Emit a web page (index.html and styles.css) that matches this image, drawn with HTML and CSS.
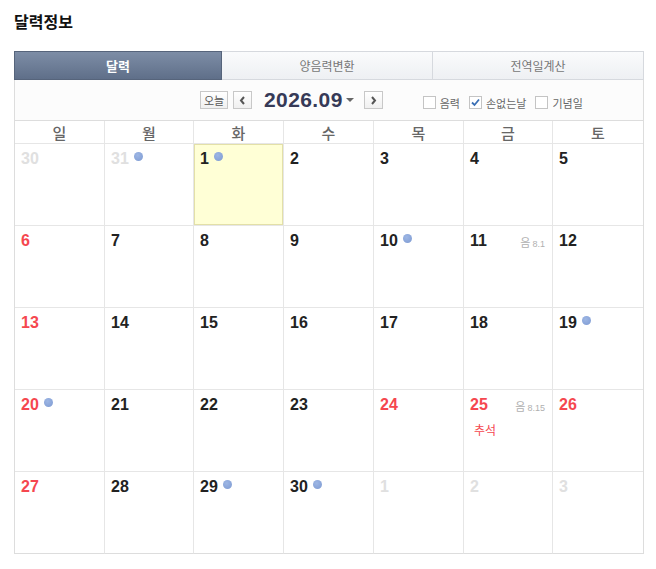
FILE: index.html
```html
<!DOCTYPE html>
<html lang="ko">
<head>
<meta charset="utf-8">
<link rel="stylesheet" href="styles.css">
</head>
<body>
<div class="wrap">
  <h1 class="title">달력정보</h1>
  <div class="tabs">
    <div class="tab active">달력</div>
    <div class="tab">양음력변환</div>
    <div class="tab">전역일계산</div>
  </div>
  <div class="toolbar">
    <button class="btn today">오늘</button>
    <button class="btn arrow"><svg width="7" height="9" viewBox="0 0 7 9"><path d="M5 1 L2 4.5 L5 8" fill="none" stroke="#555" stroke-width="2"/></svg></button>
    <div class="month">2026.09</div>
    <span class="caret"></span>
    <button class="btn arrow"><svg width="7" height="9" viewBox="0 0 7 9"><path d="M2 1 L5 4.5 L2 8" fill="none" stroke="#555" stroke-width="2"/></svg></button>
    <div class="checks">
      <label class="chk"><span class="box"></span>음력</label>
      <label class="chk"><span class="box"><svg width="11" height="11" viewBox="0 0 11 11"><path d="M2 5.5 L4.5 8 L9 2.5" fill="none" stroke="#3a6fb5" stroke-width="1.8"/></svg></span>손없는날</label>
      <label class="chk"><span class="box"></span>기념일</label>
    </div>
  </div>
  <div class="grid">
    <div class="wd">일</div><div class="wd">월</div><div class="wd">화</div><div class="wd">수</div><div class="wd">목</div><div class="wd">금</div><div class="wd">토</div>

    <div class="cell"><span class="num other">30</span></div>
    <div class="cell"><span class="num other">31</span><span class="dot"></span></div>
    <div class="cell today-cell"><span class="num">1</span><span class="dot"></span></div>
    <div class="cell"><span class="num">2</span></div>
    <div class="cell"><span class="num">3</span></div>
    <div class="cell"><span class="num">4</span></div>
    <div class="cell"><span class="num">5</span></div>

    <div class="cell"><span class="num red">6</span></div>
    <div class="cell"><span class="num">7</span></div>
    <div class="cell"><span class="num">8</span></div>
    <div class="cell"><span class="num">9</span></div>
    <div class="cell"><span class="num">10</span><span class="dot"></span></div>
    <div class="cell"><span class="num">11</span><span class="lunar"><span class="lk">음</span>8.1</span></div>
    <div class="cell"><span class="num">12</span></div>

    <div class="cell"><span class="num red">13</span></div>
    <div class="cell"><span class="num">14</span></div>
    <div class="cell"><span class="num">15</span></div>
    <div class="cell"><span class="num">16</span></div>
    <div class="cell"><span class="num">17</span></div>
    <div class="cell"><span class="num">18</span></div>
    <div class="cell"><span class="num">19</span><span class="dot"></span></div>

    <div class="cell"><span class="num red">20</span><span class="dot"></span></div>
    <div class="cell"><span class="num">21</span></div>
    <div class="cell"><span class="num">22</span></div>
    <div class="cell"><span class="num">23</span></div>
    <div class="cell"><span class="num red">24</span></div>
    <div class="cell"><span class="num red">25</span><span class="lunar"><span class="lk">음</span>8.15</span><div class="holiday">추석</div></div>
    <div class="cell"><span class="num red">26</span></div>

    <div class="cell"><span class="num red">27</span></div>
    <div class="cell"><span class="num">28</span></div>
    <div class="cell"><span class="num">29</span><span class="dot"></span></div>
    <div class="cell"><span class="num">30</span><span class="dot"></span></div>
    <div class="cell"><span class="num other">1</span></div>
    <div class="cell"><span class="num other">2</span></div>
    <div class="cell"><span class="num other">3</span></div>
  </div>
</div>
</body>
</html>
```

FILE: styles.css
```css
* { box-sizing: border-box; }
body {
  margin: 0;
  background: #fff;
  font-family: "Noto Sans CJK KR", "Noto Sans", sans-serif;
}
.wrap {
  width: 630px;
  margin-left: 14px;
}
.title {
  margin: 0;
  padding-top: 10px;
  height: 51px;
  font-size: 16px;
  line-height: 22px;
  font-weight: 700;
  color: #111;
}
.tabs {
  display: flex;
  height: 29px;
}
.tab {
  flex: 1;
  display: flex;
  align-items: center;
  justify-content: center;
  font-size: 12px;
  color: #777;
  background: linear-gradient(#fafbfc, #eef0f3);
  border: 1px solid #d6d9de;
  border-left: none;
}
.tab:last-child { flex: 0 0 211px; }
.tab.active {
  flex: 0 0 208px;
  color: #fff;
  font-weight: 700;
  font-size: 13px;
  background: linear-gradient(#7d8da6, #5f6f89);
  border: 1px solid #56647b;
}
.toolbar {
  height: 40px;
  display: flex;
  align-items: center;
  padding-left: 185px;
  background: #fcfcfc;
  border-left: 1px solid #ddd;
  border-right: 1px solid #ddd;
}
.btn {
  height: 18px;
  padding: 0;
  margin: 0;
  border: 1px solid #c8c8c8;
  background: linear-gradient(#fff, #f0f0f0);
  font-family: "Noto Sans CJK KR", sans-serif;
  display: flex;
  align-items: center;
  justify-content: center;
}
.today {
  width: 28px;
  font-size: 11px;
  color: #555;
  line-height: 14px;
}
.arrow {
  width: 19px;
  margin-left: 5px;
}
.month {
  margin-left: 12px;
  font-family: "Liberation Sans", Arial, sans-serif;
  font-weight: 700;
  font-size: 21px;
  line-height: 24px;
  color: #363a57;
  letter-spacing: 0.4px;
}
.caret {
  width: 0;
  height: 0;
  margin-left: 3px;
  margin-right: 5px;
  border-left: 4px solid transparent;
  border-right: 4px solid transparent;
  border-top: 4px solid #666;
}
.checks {
  display: flex;
  align-items: center;
  margin-left: 40px;
  margin-top: 5px;
}
.chk {
  display: flex;
  align-items: center;
  font-size: 11px;
  color: #666;
  margin-right: 9px;
}
.box {
  width: 13px;
  height: 13px;
  border: 1px solid #c4c4c4;
  background: #fff;
  margin-right: 4px;
  display: flex;
  align-items: center;
  justify-content: center;
}
.grid {
  display: grid;
  grid-template-columns: 90px 89px 90px 90px 90px 89px 1fr;
  grid-template-rows: 23px repeat(5, 82px);
  border-left: 1px solid #ddd;
  border-top: 1px solid #ddd;
  border-right: 1px solid #ddd;
}
.wd {
  display: flex;
  align-items: center;
  justify-content: center;
  font-size: 15px;
  color: #666;
  font-weight: 500;
  border-right: 1px solid #e6e6e6;
  border-bottom: 1px solid #e6e6e6;
}
.wd:nth-child(7) { border-right: none; }
.cell {
  position: relative;
  padding: 5px 7px 0 6px;
  border-right: 1px solid #e6e6e6;
  border-bottom: 1px solid #e6e6e6;
}
.cell:nth-child(7n) { border-right: none; }
.grid .cell:nth-last-child(-n+7) { border-bottom-color: #ddd; }
.today-cell {
  background: #ffffd6;
  box-shadow: inset 0 0 0 1px #e3e0a8;
}
.num {
  display: inline-block;
  font-family: "Liberation Sans", Arial, sans-serif;
  font-weight: 700;
  font-size: 16px;
  line-height: 20px;
  color: #222;
  vertical-align: top;
}
.num.red { color: #f5474f; }
.num.other { color: #e0e0e0; }
.dot {
  display: inline-block;
  width: 9px;
  height: 9px;
  border-radius: 50%;
  margin-left: 5px;
  margin-top: 3px;
  vertical-align: top;
  background: radial-gradient(circle at 40% 35%, #9db6e4, #7d9ad2);
}
.lunar {
  float: right;
  margin-top: 5px;
  font-family: "Liberation Sans", Arial, sans-serif;
  font-size: 9px;
  line-height: 12px;
  color: #b0b0b0;
}
.lk {
  font-family: "Noto Sans CJK KR", sans-serif;
  font-size: 11px;
  margin-right: 2px;
}
.holiday {
  margin-top: 4px;
  padding-left: 4px;
  font-size: 12px;
  color: #f5474f;
  line-height: 14px;
}
```
